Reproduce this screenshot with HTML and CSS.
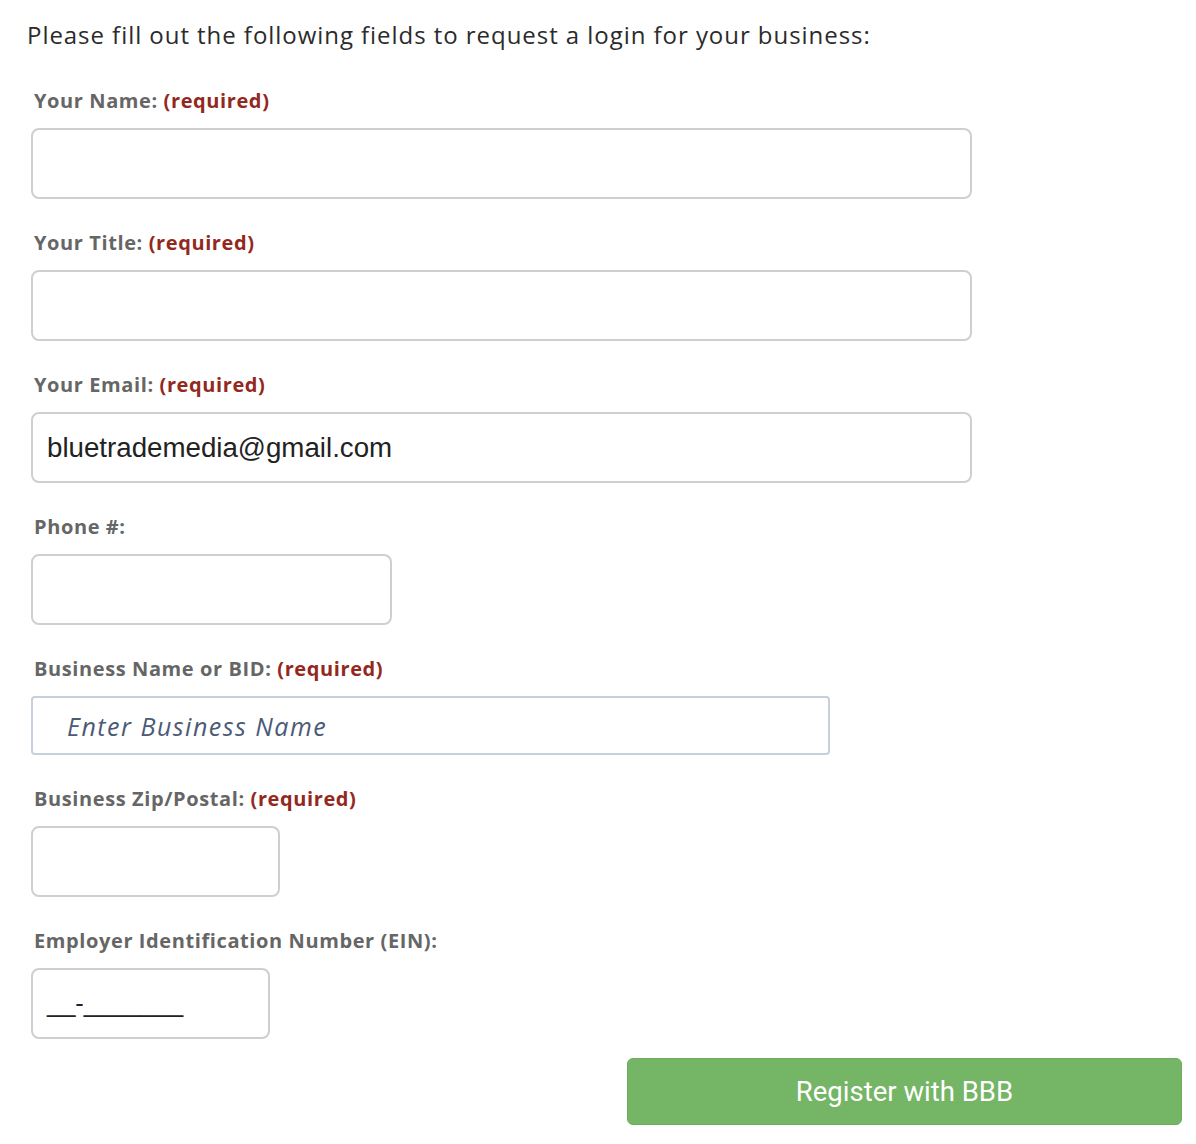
FILE: index.html
```html
<!DOCTYPE html>
<html>
<head>
<meta charset="utf-8">
<link rel="stylesheet" href="styles.css">
</head>
<body>
<div class="page">
  <p class="intro">Please fill out the following fields to request a login for your business:</p>
  <form class="form">
    <div class="field">
      <label class="label">Your Name: <span class="req">(required)</span></label>
      <div class="input w-full"></div>
    </div>
    <div class="field">
      <label class="label">Your Title: <span class="req">(required)</span></label>
      <div class="input w-full"></div>
    </div>
    <div class="field">
      <label class="label">Your Email: <span class="req">(required)</span></label>
      <div class="input w-full"><span class="value">bluetrademedia@gmail.com</span></div>
    </div>
    <div class="field">
      <label class="label">Phone #:</label>
      <div class="input w-phone"></div>
    </div>
    <div class="field">
      <label class="label">Business Name or BID: <span class="req">(required)</span></label>
      <div class="input search w-biz"><span class="placeholder">Enter Business Name</span></div>
    </div>
    <div class="field">
      <label class="label">Business Zip/Postal: <span class="req">(required)</span></label>
      <div class="input w-zip"></div>
    </div>
    <div class="field">
      <label class="label">Employer Identification Number (EIN):</label>
      <div class="input w-ein"><span class="value mask">__-_______</span></div>
    </div>
    <div class="actions">
      <button type="button" class="btn">Register with BBB</button>
    </div>
  </form>
</div>
</body>
</html>
```
FILE: styles.css
```css
* { box-sizing: border-box; }
html, body { margin: 0; padding: 0; background: #fff; }
.page {
  width: 1196px;
  padding: 18px 0 0 0;
}
.intro {
  margin: 0 0 0 27px;
  font-family: "Open Sans", sans-serif;
  font-size: 24px;
  letter-spacing: 0.95px;
  line-height: 34px;
  color: #2b2b2b;
}
.form {
  display: flex;
  flex-direction: column;
  padding-left: 31px;
  margin-top: 34px;
}
.field {
  display: flex;
  flex-direction: column;
  margin-bottom: 29px;
}
.label {
  font-family: "Open Sans", sans-serif;
  font-weight: 700;
  font-size: 20px;
  letter-spacing: 0.6px;
  line-height: 30px;
  color: #666;
  margin-left: 3px;
  margin-bottom: 12px;
}
.req { color: #93291e; }
.input {
  height: 71px;
  border: 2px solid #cfcfcf;
  border-radius: 8px;
  display: flex;
  align-items: center;
  padding-left: 14px;
  font-family: "Liberation Sans", Arial, sans-serif;
}
.w-full { width: 941px; }
.w-phone { width: 361px; }
.w-biz { width: 799px; }
.w-zip { width: 249px; }
.w-ein { width: 239px; }
.input.search {
  height: 59px;
  border: 2px solid #c7d0dd;
  border-radius: 4px;
  padding-left: 34px;
}
.value {
  font-size: 27.7px;
  color: #222;
}
.value.mask {
  font-size: 25.5px;
}
.placeholder {
  font-family: "Open Sans", sans-serif;
  font-style: italic;
  font-size: 25px;
  letter-spacing: 1.5px;
  color: #4b5a76;
}
.actions {
  display: flex;
  justify-content: flex-end;
  margin-top: -10px;
  padding-right: 14px;
}
.btn {
  width: 555px;
  height: 67px;
  background: #74b566;
  border: 1px solid #6aab5c;
  border-radius: 6px;
  color: #fff;
  font-family: Roboto, sans-serif;
  font-size: 27.5px;
  cursor: pointer;
}
```
